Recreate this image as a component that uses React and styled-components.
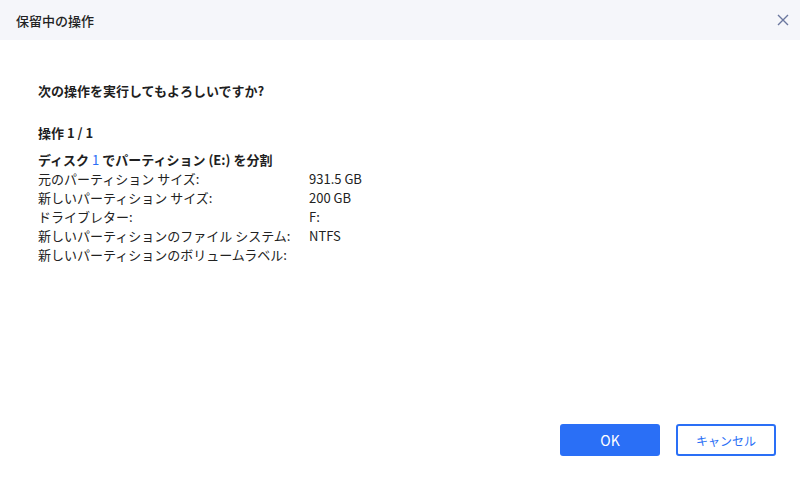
import React from "react";
import styled, { createGlobalStyle } from "styled-components";

const Global = createGlobalStyle`
  html, body { margin: 0; padding: 0; background: #fff; }
  body { font-family: "Noto Sans CJK JP", "Noto Sans", sans-serif; color: #1f1f1f; }
  * { box-sizing: border-box; }
`;

const Dialog = styled.div`
  width: 800px;
  height: 480px;
  display: flex;
  flex-direction: column;
  background: #fff;
`;

const Header = styled.div`
  height: 40px;
  flex: none;
  background: #f5f6fa;
  display: flex;
  align-items: center;
  justify-content: space-between;
  padding: 0 5px 0 16px;
`;

const Title = styled.div`
  font-size: 13px;
  font-weight: 500;
  color: #222;
`;

const Close = styled.button`
  width: 24px;
  height: 24px;
  border: none;
  background: none;
  padding: 0;
  display: flex;
  align-items: center;
  justify-content: center;
`;

const Body = styled.div`
  flex: 1;
  padding: 41px 38px 0 38px;
  display: flex;
  flex-direction: column;
`;

const Question = styled.div`
  font-size: 13px;
  font-weight: 700;
  line-height: 20px;
  margin-bottom: 22px;
`;

const OpTitle = styled.div`
  font-size: 13px;
  font-weight: 700;
  line-height: 20px;
  margin-bottom: 7px;
`;

const OpHead = styled.div`
  font-size: 13px;
  font-weight: 700;
  line-height: 19px;
`;

const Num = styled.span`
  color: #2a6ff6;
  font-weight: 400;
`;

const Grid = styled.div`
  display: grid;
  grid-template-columns: 271px auto;
  font-size: 13px;
  line-height: 19px;
  color: #222;
`;

const Footer = styled.div`
  display: flex;
  justify-content: flex-end;
  gap: 16px;
  padding: 0 24px 24px 0;
`;

const Button = styled.button`
  width: 100px;
  height: 32px;
  border-radius: 3px;
  font-family: inherit;
  font-size: ${(p) => (p.$primary ? "14px" : "12px")};
  cursor: pointer;
  background: ${(p) => (p.$primary ? "#2a6ff6" : "#fff")};
  color: ${(p) => (p.$primary ? "#fff" : "#2a6ff6")};
  border: ${(p) => (p.$primary ? "none" : "2px solid #2a6ff6")};
`;

const rows = [
  ["元のパーティション サイズ:", "931.5 GB"],
  ["新しいパーティション サイズ:", "200 GB"],
  ["ドライブレター:", "F:"],
  ["新しいパーティションのファイル システム:", "NTFS"],
  ["新しいパーティションのボリュームラベル:", ""],
];

export default function App() {
  return (
    <Dialog>
      <Global />
      <Header>
        <Title>保留中の操作</Title>
        <Close aria-label="close">
          <svg width="12" height="12" viewBox="0 0 12 12">
            <path d="M1 1L11 11M11 1L1 11" stroke="#6b779e" strokeWidth="1.4" />
          </svg>
        </Close>
      </Header>
      <Body>
        <Question>次の操作を実行してもよろしいですか?</Question>
        <OpTitle>操作 1 / 1</OpTitle>
        <OpHead>
          ディスク <Num>1</Num> でパーティション (E:) を分割
        </OpHead>
        <Grid>
          {rows.map(([k, v]) => (
            <React.Fragment key={k}>
              <span>{k}</span>
              <span>{v}</span>
            </React.Fragment>
          ))}
        </Grid>
      </Body>
      <Footer>
        <Button $primary>OK</Button>
        <Button>キャンセル</Button>
      </Footer>
    </Dialog>
  );
}
